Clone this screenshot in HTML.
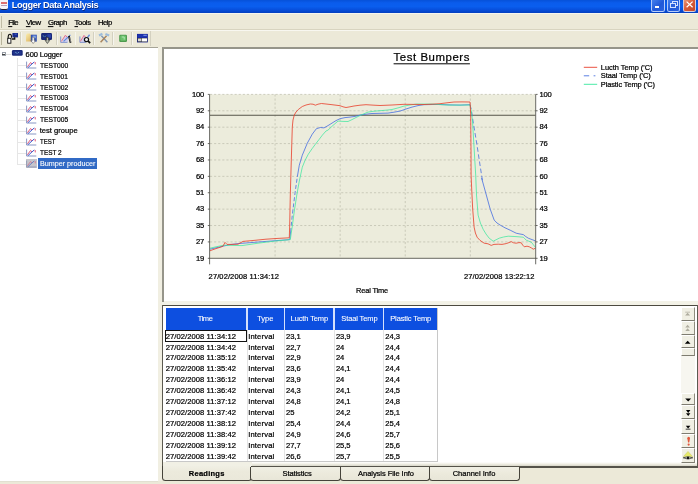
<!DOCTYPE html>
<html><head><meta charset="utf-8"><title>Logger Data Analysis</title>
<style>
html,body{margin:0;padding:0;}
body{width:698px;height:484px;overflow:hidden;background:#ECE9D8;position:relative;font-family:"Liberation Sans",sans-serif;font-size:7.5px;color:#000;}
.a{position:absolute;}
.t{position:absolute;white-space:nowrap;line-height:1;-webkit-text-stroke:0.22px currentColor;}
#w{position:absolute;left:0;top:0;width:698px;height:484px;will-change:transform;}
</style></head><body><div id="w">

<div class="a" style="left:0px;top:0px;width:698px;height:13px;background:linear-gradient(#0651D8 0%,#0A5CEC 22%,#0A5EEE 50%,#074FDC 75%,#0444C8 92%,#0540BE 100%);"></div>
<div class="a" style="left:0;top:0;width:8px;height:9px;background:#f4f4f8;border-radius:0 0 2px 2px;border-bottom:1px solid #223;"></div>
<div class="a" style="left:1px;top:2.2px;width:6px;height:1.4px;background:#dc7070;"></div>
<div class="a" style="left:1px;top:4.6px;width:6px;height:0.9px;background:#b8a0b8;"></div>
<div class="t" style="left:11.8px;top:5.8px;font-size:9.2px;letter-spacing:-0.36px;color:#fff;transform-origin:0 50%;transform:translate(0,-50%);font-weight:bold;-webkit-text-stroke:0;text-shadow:0.5px 0.5px 0 #0a2a80;">Logger Data Analysis</div>
<div class="a" style="left:651.2px;top:-3px;width:13.6px;height:14.6px;border-radius:2.2px;background:linear-gradient(135deg,#4a86f0,#2058d8 60%,#2a62e0);border:0.7px solid rgba(214,228,255,0.8);box-sizing:border-box;"></div>
<div class="a" style="left:666.8px;top:-3px;width:13.6px;height:14.6px;border-radius:2.2px;background:linear-gradient(135deg,#4a86f0,#2058d8 60%,#2a62e0);border:0.7px solid rgba(214,228,255,0.8);box-sizing:border-box;"></div>
<div class="a" style="left:682.8px;top:-3px;width:13.6px;height:14.6px;border-radius:2.2px;background:linear-gradient(135deg,#eca282,#d85c3a 50%,#c44828);border:0.7px solid rgba(214,228,255,0.8);box-sizing:border-box;"></div>
<div class="a" style="left:655px;top:5.8px;width:4.4px;height:2px;background:#fff;"></div>
<div class="a" style="left:672.4px;top:1px;width:3.4px;height:3px;border:0.7px solid #d4e0ff;box-sizing:content-box;border-top-width:1px"></div>
<div class="a" style="left:670.3px;top:3.2px;width:3.4px;height:3px;border:0.7px solid #d4e0ff;background:#2a60dc;border-top-width:1px"></div>
<svg class="a" style="left:685px;top:0.4px" width="10" height="10"><path d="M1.6 1.6 L7.6 7.2 M7.6 1.6 L1.6 7.2" stroke="#fff" stroke-width="1.25" fill="none"/></svg>
<div class="a" style="left:0px;top:13px;width:698px;height:17px;background:#ECE9D8;"></div>
<div class="a" style="left:0px;top:13px;width:698px;height:0.9px;background:#f6f5ee;"></div>
<div class="a" style="left:1.3px;top:15.5px;width:0.8px;height:12px;background:#c0bca6;"></div>
<div class="t" style="left:8.2px;top:22.5px;font-size:7.8px;letter-spacing:-0.695px;color:#000;transform-origin:0 50%;transform:translate(0,-50%);text-decoration-thickness:0.7px;text-underline-offset:0.8px;"><u>F</u>ile</div>
<div class="t" style="left:25.9px;top:22.5px;font-size:7.8px;letter-spacing:-0.466px;color:#000;transform-origin:0 50%;transform:translate(0,-50%);text-decoration-thickness:0.7px;text-underline-offset:0.8px;"><u>V</u>iew</div>
<div class="t" style="left:47.9px;top:22.5px;font-size:7.8px;letter-spacing:-0.534px;color:#000;transform-origin:0 50%;transform:translate(0,-50%);text-decoration-thickness:0.7px;text-underline-offset:0.8px;"><u>G</u>raph</div>
<div class="t" style="left:74.5px;top:22.5px;font-size:7.8px;letter-spacing:-0.401px;color:#000;transform-origin:0 50%;transform:translate(0,-50%);text-decoration-thickness:0.7px;text-underline-offset:0.8px;"><u>T</u>ools</div>
<div class="t" style="left:98.1px;top:22.5px;font-size:7.8px;letter-spacing:-0.637px;color:#000;transform-origin:0 50%;transform:translate(0,-50%);text-decoration-thickness:0.7px;text-underline-offset:0.8px;">Help</div>
<div class="a" style="left:0px;top:29.3px;width:698px;height:0.8px;background:#d8d4c0;"></div>
<div class="a" style="left:0px;top:30px;width:698px;height:0.6px;background:#f8f7f0;"></div>
<div class="a" style="left:1.2px;top:32px;width:0.8px;height:13px;background:#b8b49c;"></div>
<div class="a" style="left:20.200000000000003px;top:32px;width:0.8px;height:13px;background:#d4d1c0;"></div>
<div class="a" style="left:21.0px;top:32px;width:0.7px;height:13px;background:#f6f5ee;"></div>
<div class="a" style="left:55.800000000000004px;top:32px;width:0.8px;height:13px;background:#d4d1c0;"></div>
<div class="a" style="left:56.6px;top:32px;width:0.7px;height:13px;background:#f6f5ee;"></div>
<div class="a" style="left:74.6px;top:32px;width:0.8px;height:13px;background:#d4d1c0;"></div>
<div class="a" style="left:75.4px;top:32px;width:0.7px;height:13px;background:#f6f5ee;"></div>
<div class="a" style="left:93.39999999999999px;top:32px;width:0.8px;height:13px;background:#d4d1c0;"></div>
<div class="a" style="left:94.2px;top:32px;width:0.7px;height:13px;background:#f6f5ee;"></div>
<div class="a" style="left:112.3px;top:32px;width:0.8px;height:13px;background:#d4d1c0;"></div>
<div class="a" style="left:113.10000000000001px;top:32px;width:0.7px;height:13px;background:#f6f5ee;"></div>
<div class="a" style="left:131.4px;top:32px;width:0.8px;height:13px;background:#d4d1c0;"></div>
<div class="a" style="left:132.20000000000002px;top:32px;width:0.7px;height:13px;background:#f6f5ee;"></div>
<div class="a" style="left:150.3px;top:30.5px;width:0.8px;height:15.5px;background:#d4d1c0;"></div>
<svg class="a" style="left:0;top:30px" width="160" height="17" viewBox="0 30 160 17">
<defs><linearGradient id="fg" x1="0" y1="0" x2="1" y2="1"><stop offset="0" stop-color="#fbeeb0"/><stop offset="1" stop-color="#d6a850"/></linearGradient></defs>
<!-- 1 logger -->
<rect x="12.4" y="33" width="5.6" height="4.4" fill="#182a8a"/><rect x="14.6" y="33.6" width="2.2" height="1.2" fill="#3a58c4"/>
<path d="M14.6 37.2 V39 H11.8" stroke="#111" stroke-width="1.5" fill="none"/>
<rect x="7.7" y="38.3" width="3.2" height="4.9" fill="#fff" stroke="#111" stroke-width="0.9"/>
<path d="M8.2 38.2 C8 35.2 8.8 34.3 10 34.3 C11.3 34.3 11.6 35.4 11.6 37.8" fill="none" stroke="#111" stroke-width="1.1"/>
<!-- 2 folder -->
<path d="M26 41.6 V35 L27 33.6 H29.8 L30.6 34.8 H33.4 V41.6 Z" fill="url(#fg)"/>
<rect x="30.8" y="34.7" width="6" height="6.9" fill="#3454b4"/>
<rect x="32.6" y="35.6" width="3.2" height="2.6" fill="#86a8ea"/>
<path d="M32.2 37.2 h2 v3.4 h1.3 l-2.3 2.9 l-2.3 -2.9 h1.3 z" fill="#fff" stroke="#444" stroke-width="0.5"/>
<!-- 3 monitor -->
<rect x="41.1" y="33.1" width="10.9" height="6.9" rx="1.3" fill="#1a2878"/>
<rect x="47.4" y="34.2" width="3.6" height="3.6" fill="#2c44a8"/>
<path d="M42.8 35.6 l1.6 1 M45 36.8 l1 -1.2" stroke="#5a9ab8" stroke-width="0.9"/>
<path d="M46.4 37.4 h2 v3 h1.3 l-2.3 3.1 l-2.3 -3.1 h1.3 z" fill="#b8bcae" stroke="#222" stroke-width="0.6"/>
<!-- 4 chart pen -->
<path d="M61.6 42 L65.4 35.4 L68.2 38.6 V42 Z" fill="#d0d0ee"/>
<path d="M60.7 42.4 V36.4 M60.7 42.4 H67.5" stroke="#7a8ccc" stroke-width="0.9" fill="none"/>
<path d="M61.4 41.4 L65.4 35.2 L68.2 38.4" stroke="#e4708c" stroke-width="1" fill="none"/>
<path d="M63.6 41.4 L70.4 34.8" stroke="#5a86dc" stroke-width="1.1" fill="none"/>
<path d="M68.9 36 L70.6 42.8" stroke="#111" stroke-width="1.7" fill="none"/>
<path d="M69.6 37.4 L70.9 42.2" stroke="#e8e8e8" stroke-width="0.5" fill="none"/>
<!-- 5 chart zoom -->
<path d="M80.6 42 L84 35.6 L86.4 38 V42 Z" fill="#d0d0ee"/>
<path d="M79.9 42.4 V36.4 M79.9 42.4 H86" stroke="#7a8ccc" stroke-width="0.9" fill="none"/>
<path d="M80.4 41.4 L84 35.4 L86 37.6" stroke="#e4708c" stroke-width="1" fill="none"/>
<path d="M87.6 37.2 L89.6 34.8" stroke="#6a90e0" stroke-width="1.4" fill="none"/>
<circle cx="86.5" cy="39.6" r="2.1" fill="#ecf0f0" stroke="#111" stroke-width="1.2"/>
<path d="M88 41.2 L90.2 43" stroke="#111" stroke-width="1.7"/>
<!-- 6 tools -->
<path d="M101.4 35.8 L107.4 42.2" stroke="#7e96b4" stroke-width="1.4"/>
<path d="M106.6 35.8 L100.6 42.2" stroke="#a8845c" stroke-width="1.5"/>
<path d="M99 35.4 L102.4 33.8 M105.4 34 L109.2 35.6" stroke="#9cbcdc" stroke-width="2.2"/>
<!-- 7 green -->
<rect x="119.2" y="34.7" width="7.8" height="7.3" rx="1.2" fill="#4e9a4e"/>
<rect x="120.2" y="35.6" width="5.8" height="5.2" rx="1" fill="#6cc06c"/>
<path d="M121.8 37 h2.4 v2.6" stroke="#b8ecb8" stroke-width="0.9" fill="none"/>
<!-- 8 window -->
<rect x="137" y="33.9" width="10.8" height="8.5" fill="#14208c"/>
<rect x="137.4" y="34.2" width="10" height="3.4" fill="#1e34b0"/>
<rect x="143.4" y="34.8" width="3.4" height="0.9" fill="#90a8f0"/>
<rect x="137.6" y="38" width="9.6" height="3.8" fill="#4a4a4a"/>
<rect x="142" y="38.4" width="5" height="3" fill="#fff"/>
<rect x="138" y="38.6" width="3.4" height="2.6" fill="#d8d8d8"/>
</svg>
<div class="a" style="left:0px;top:46.5px;width:157.5px;height:1.5px;background:#a6a496;"></div>
<div class="a" style="left:0px;top:48px;width:157.5px;height:433.3px;background:#fff;"></div>
<div class="a" style="left:0px;top:481.3px;width:158px;height:0.7px;background:#e2e0d2;"></div>
<div class="a" style="left:157.5px;top:47px;width:0.6px;height:434.3px;background:#dcd9c8;"></div>
<div class="a" style="left:1.5px;top:52.1px;width:4.4px;height:4.3px;border:0.8px solid #9aa0a8;background:#fff;box-sizing:border-box"></div>
<div class="a" style="left:2.3px;top:53.9px;width:2.8px;height:0.8px;background:#444;"></div>
<div class="a" style="left:6px;top:54.1px;width:5px;height:0.6px;background:#dcdcdc;"></div>
<svg class="a" style="left:11px;top:49px" width="13" height="9"><rect x="0.9" y="1.1" width="10.8" height="5.7" rx="1.4" fill="#1a2a7a"/><rect x="2.2" y="2.2" width="8.2" height="3.4" rx="0.8" fill="#22368e"/><path d="M4.2 3.2 l1.6 1 M6.6 4.4 l1.4 -1.4" stroke="#6fa4c8" stroke-width="0.9"/></svg>
<div class="t" style="left:25.6px;top:54.9px;font-size:7.5px;letter-spacing:-0.135px;color:#000;transform-origin:0 50%;transform:translate(0,-50%);">600 Logger</div>
<div class="a" style="left:17.4px;top:57.8px;width:0.6px;height:106.6px;background:#e6e6e6;"></div>
<div class="a" style="left:17.4px;top:65.2px;width:8.4px;height:0.6px;background:#e6e6e6;"></div>
<svg class="a" style="left:26px;top:61.30px" width="11" height="8"><path d="M0.6 0.6 V7 H10.3" stroke="#6a7cb4" stroke-width="0.8" fill="none"/><path d="M1.4 5.8 L4.6 1.5 L5.9 3" stroke="#e04868" stroke-width="0.9" fill="none"/><path d="M1.9 6.7 L5 3.8 L8.3 0.9" stroke="#3c5ad0" stroke-width="1" fill="none"/><path d="M9.1 1 L9.3 3.4" stroke="#e04868" stroke-width="0.9"/></svg>
<div class="t" style="left:39.7px;top:65.7px;font-size:7.6px;letter-spacing:0px;color:#000;transform-origin:0 50%;transform:translate(0,-50%) scaleX(0.8822);">TEST000</div>
<div class="a" style="left:17.4px;top:76.13px;width:8.4px;height:0.6px;background:#e6e6e6;"></div>
<svg class="a" style="left:26px;top:72.23px" width="11" height="8"><path d="M0.6 0.6 V7 H10.3" stroke="#6a7cb4" stroke-width="0.8" fill="none"/><path d="M1.4 5.8 L4.6 1.5 L5.9 3" stroke="#e04868" stroke-width="0.9" fill="none"/><path d="M1.9 6.7 L5 3.8 L8.3 0.9" stroke="#3c5ad0" stroke-width="1" fill="none"/><path d="M9.1 1 L9.3 3.4" stroke="#e04868" stroke-width="0.9"/></svg>
<div class="t" style="left:39.7px;top:76.63px;font-size:7.6px;letter-spacing:0px;color:#000;transform-origin:0 50%;transform:translate(0,-50%) scaleX(0.8666);">TEST001</div>
<div class="a" style="left:17.4px;top:87.06px;width:8.4px;height:0.6px;background:#e6e6e6;"></div>
<svg class="a" style="left:26px;top:83.16px" width="11" height="8"><path d="M0.6 0.6 V7 H10.3" stroke="#6a7cb4" stroke-width="0.8" fill="none"/><path d="M1.4 5.8 L4.6 1.5 L5.9 3" stroke="#e04868" stroke-width="0.9" fill="none"/><path d="M1.9 6.7 L5 3.8 L8.3 0.9" stroke="#3c5ad0" stroke-width="1" fill="none"/><path d="M9.1 1 L9.3 3.4" stroke="#e04868" stroke-width="0.9"/></svg>
<div class="t" style="left:39.7px;top:87.56px;font-size:7.6px;letter-spacing:0px;color:#000;transform-origin:0 50%;transform:translate(0,-50%) scaleX(0.8822);">TEST002</div>
<div class="a" style="left:17.4px;top:97.99000000000001px;width:8.4px;height:0.6px;background:#e6e6e6;"></div>
<svg class="a" style="left:26px;top:94.09px" width="11" height="8"><path d="M0.6 0.6 V7 H10.3" stroke="#6a7cb4" stroke-width="0.8" fill="none"/><path d="M1.4 5.8 L4.6 1.5 L5.9 3" stroke="#e04868" stroke-width="0.9" fill="none"/><path d="M1.9 6.7 L5 3.8 L8.3 0.9" stroke="#3c5ad0" stroke-width="1" fill="none"/><path d="M9.1 1 L9.3 3.4" stroke="#e04868" stroke-width="0.9"/></svg>
<div class="t" style="left:39.7px;top:98.49000000000001px;font-size:7.6px;letter-spacing:0px;color:#000;transform-origin:0 50%;transform:translate(0,-50%) scaleX(0.8822);">TEST003</div>
<div class="a" style="left:17.4px;top:108.92px;width:8.4px;height:0.6px;background:#e6e6e6;"></div>
<svg class="a" style="left:26px;top:105.02px" width="11" height="8"><path d="M0.6 0.6 V7 H10.3" stroke="#6a7cb4" stroke-width="0.8" fill="none"/><path d="M1.4 5.8 L4.6 1.5 L5.9 3" stroke="#e04868" stroke-width="0.9" fill="none"/><path d="M1.9 6.7 L5 3.8 L8.3 0.9" stroke="#3c5ad0" stroke-width="1" fill="none"/><path d="M9.1 1 L9.3 3.4" stroke="#e04868" stroke-width="0.9"/></svg>
<div class="t" style="left:39.7px;top:109.42px;font-size:7.6px;letter-spacing:0px;color:#000;transform-origin:0 50%;transform:translate(0,-50%) scaleX(0.8822);">TEST004</div>
<div class="a" style="left:17.4px;top:119.85px;width:8.4px;height:0.6px;background:#e6e6e6;"></div>
<svg class="a" style="left:26px;top:115.95px" width="11" height="8"><path d="M0.6 0.6 V7 H10.3" stroke="#6a7cb4" stroke-width="0.8" fill="none"/><path d="M1.4 5.8 L4.6 1.5 L5.9 3" stroke="#e04868" stroke-width="0.9" fill="none"/><path d="M1.9 6.7 L5 3.8 L8.3 0.9" stroke="#3c5ad0" stroke-width="1" fill="none"/><path d="M9.1 1 L9.3 3.4" stroke="#e04868" stroke-width="0.9"/></svg>
<div class="t" style="left:39.7px;top:120.35px;font-size:7.6px;letter-spacing:0px;color:#000;transform-origin:0 50%;transform:translate(0,-50%) scaleX(0.8822);">TEST005</div>
<div class="a" style="left:17.4px;top:130.78px;width:8.4px;height:0.6px;background:#e6e6e6;"></div>
<svg class="a" style="left:26px;top:126.88px" width="11" height="8"><path d="M0.6 0.6 V7 H10.3" stroke="#6a7cb4" stroke-width="0.8" fill="none"/><path d="M1.4 5.8 L4.6 1.5 L5.9 3" stroke="#e04868" stroke-width="0.9" fill="none"/><path d="M1.9 6.7 L5 3.8 L8.3 0.9" stroke="#3c5ad0" stroke-width="1" fill="none"/><path d="M9.1 1 L9.3 3.4" stroke="#e04868" stroke-width="0.9"/></svg>
<div class="t" style="left:39.7px;top:131.28px;font-size:7.6px;letter-spacing:0.0px;color:#000;transform-origin:0 50%;transform:translate(0,-50%);">test groupe</div>
<div class="a" style="left:17.4px;top:141.70999999999998px;width:8.4px;height:0.6px;background:#e6e6e6;"></div>
<svg class="a" style="left:26px;top:137.81px" width="11" height="8"><path d="M0.6 0.6 V7 H10.3" stroke="#6a7cb4" stroke-width="0.8" fill="none"/><path d="M1.4 5.8 L4.6 1.5 L5.9 3" stroke="#e04868" stroke-width="0.9" fill="none"/><path d="M1.9 6.7 L5 3.8 L8.3 0.9" stroke="#3c5ad0" stroke-width="1" fill="none"/><path d="M9.1 1 L9.3 3.4" stroke="#e04868" stroke-width="0.9"/></svg>
<div class="t" style="left:39.7px;top:142.20999999999998px;font-size:7.6px;letter-spacing:0px;color:#000;transform-origin:0 50%;transform:translate(0,-50%) scaleX(0.7929);">TEST</div>
<div class="a" style="left:17.4px;top:152.64px;width:8.4px;height:0.6px;background:#e6e6e6;"></div>
<svg class="a" style="left:26px;top:148.74px" width="11" height="8"><path d="M0.6 0.6 V7 H10.3" stroke="#6a7cb4" stroke-width="0.8" fill="none"/><path d="M1.4 5.8 L4.6 1.5 L5.9 3" stroke="#e04868" stroke-width="0.9" fill="none"/><path d="M1.9 6.7 L5 3.8 L8.3 0.9" stroke="#3c5ad0" stroke-width="1" fill="none"/><path d="M9.1 1 L9.3 3.4" stroke="#e04868" stroke-width="0.9"/></svg>
<div class="t" style="left:39.7px;top:153.14px;font-size:7.6px;letter-spacing:0px;color:#000;transform-origin:0 50%;transform:translate(0,-50%) scaleX(0.8473);">TEST 2</div>
<div class="a" style="left:17.4px;top:163.57px;width:8.4px;height:0.6px;background:#e6e6e6;"></div>
<div class="a" style="left:25.8px;top:158.87px;width:10.8px;height:9.2px;background:#c6c6cc;"></div>
<svg class="a" style="left:26px;top:159.67px" width="11" height="8"><path d="M0.6 0.6 V7 H10.3" stroke="#8890b0" stroke-width="0.8" fill="none"/><path d="M1.4 5.8 L4.6 1.5 L5.9 3" stroke="#d27890" stroke-width="0.9" fill="none"/><path d="M1.9 6.7 L5 3.8 L8.3 0.9" stroke="#6880c4" stroke-width="1" fill="none"/><path d="M9.1 1 L9.3 3.4" stroke="#d27890" stroke-width="0.9"/></svg>
<div class="a" style="left:38px;top:158.07px;width:59px;height:10.7px;background:#316AC5;"></div>
<div class="t" style="left:39.5px;top:164.07px;font-size:7.6px;letter-spacing:0px;color:#fff;transform-origin:0 50%;transform:translate(0,-50%) scaleX(0.9442);-webkit-text-stroke:0.1px #fff;">Bumper producer</div>
<div class="a" style="left:158.1px;top:47px;width:4.2px;height:434.3px;background:#f1efe2;"></div>
<div class="a" style="left:162px;top:301.4px;width:536px;height:3.6px;background:#f3f2e7;"></div>
<div class="a" style="left:162.3px;top:47px;width:535.7px;height:1.6px;background:#96958a;"></div>
<div class="a" style="left:162.0px;top:47px;width:1.7px;height:254.6px;background:#96958a;"></div>
<div class="a" style="left:163.9px;top:48.6px;width:534.1px;height:252.8px;background:#fff;"></div>
<svg class="a" style="left:0;top:0" width="698" height="484" viewBox="0 0 698 484">
<rect x="210" y="94.4" width="325.4" height="163.9" fill="#ECECDC"/>
<path d="M210 94.40 H535.4" stroke="#bcbbab" stroke-width="0.7" stroke-dasharray="2.1 2" fill="none"/>
<path d="M210 110.79 H535.4" stroke="#bcbbab" stroke-width="0.7" stroke-dasharray="2.1 2" fill="none"/>
<path d="M210 127.18 H535.4" stroke="#bcbbab" stroke-width="0.7" stroke-dasharray="2.1 2" fill="none"/>
<path d="M210 143.57 H535.4" stroke="#bcbbab" stroke-width="0.7" stroke-dasharray="2.1 2" fill="none"/>
<path d="M210 159.96 H535.4" stroke="#bcbbab" stroke-width="0.7" stroke-dasharray="2.1 2" fill="none"/>
<path d="M210 176.35 H535.4" stroke="#bcbbab" stroke-width="0.7" stroke-dasharray="2.1 2" fill="none"/>
<path d="M210 192.74 H535.4" stroke="#bcbbab" stroke-width="0.7" stroke-dasharray="2.1 2" fill="none"/>
<path d="M210 209.13 H535.4" stroke="#bcbbab" stroke-width="0.7" stroke-dasharray="2.1 2" fill="none"/>
<path d="M210 225.52 H535.4" stroke="#bcbbab" stroke-width="0.7" stroke-dasharray="2.1 2" fill="none"/>
<path d="M210 241.91 H535.4" stroke="#bcbbab" stroke-width="0.7" stroke-dasharray="2.1 2" fill="none"/>
<path d="M275.08 94.4 V258.3" stroke="#bcbbab" stroke-width="0.7" stroke-dasharray="2.1 2" fill="none"/>
<path d="M340.16 94.4 V258.3" stroke="#bcbbab" stroke-width="0.7" stroke-dasharray="2.1 2" fill="none"/>
<path d="M405.24 94.4 V258.3" stroke="#bcbbab" stroke-width="0.7" stroke-dasharray="2.1 2" fill="none"/>
<path d="M470.32 94.4 V258.3" stroke="#bcbbab" stroke-width="0.7" stroke-dasharray="2.1 2" fill="none"/>
<path d="M210 115.2 H535.4" stroke="#56544a" stroke-width="1.15"/>
<path d="M210.0 249.2 L216.0 247.8 L223.0 246.2 L230.0 244.6 L238.0 243.6 L256.0 242.2 L274.0 240.8 L289.7 239.6 L290.6 232.0" stroke="#4870e0" stroke-width="0.82" fill="none" stroke-linejoin="round"/>
<path d="M290.6 232.0 L292.3 215.0 L295.3 191.0 L297.3 176.9" stroke="#4870e0" stroke-width="0.82" fill="none" stroke-linejoin="round" stroke-dasharray="4 2.2"/>
<path d="M297.3 176.9 L299.3 165.2 L302.3 155.2 L307.3 143.2 L312.3 134.1 L316.4 128.7 L320.4 127.5 L324.0 127.9 L328.0 125.6 L332.0 123.1 L336.0 120.6 L340.0 118.7 L345.0 117.6 L350.0 117.1 L355.0 116.4 L360.0 115.1 L366.0 114.2 L372.0 113.5 L380.0 113.3 L388.0 113.1 L394.0 112.2 L400.0 111.1 L406.0 109.0 L412.0 107.1 L418.0 105.6 L424.0 104.7 L432.0 104.5 L440.0 104.5 L450.0 104.9 L460.0 105.1 L470.0 104.7" stroke="#4870e0" stroke-width="0.82" fill="none" stroke-linejoin="round"/>
<path d="M470.0 104.7 L471.4 110.0 L473.0 121.0 L477.0 145.0 L480.0 165.0 L482.5 181.0" stroke="#4870e0" stroke-width="0.82" fill="none" stroke-linejoin="round" stroke-dasharray="4.6 2.6"/>
<path d="M481.6 178.0 L485.2 191.0 L490.2 209.1 L494.2 220.1 L497.0 223.0 L500.2 225.1 L505.0 227.8 L510.2 230.2 L516.2 233.2 L520.0 234.0 L523.3 234.6 L525.8 236.6 L528.3 238.2 L532.0 239.6 L535.3 240.8" stroke="#4870e0" stroke-width="0.82" fill="none" stroke-linejoin="round"/>
<path d="M210.0 248.2 L216.0 246.8 L224.0 245.2 L232.0 245.4 L242.0 245.6 L258.0 243.2 L274.0 241.2 L290.3 239.6 L292.3 226.0 L294.3 211.0 L296.8 195.0 L299.3 181.0 L302.3 167.2 L305.0 160.5 L308.3 154.2 L312.0 148.8 L315.4 144.2 L319.0 139.6 L322.4 135.1 L326.0 131.0 L328.0 130.1 L333.0 125.4 L338.0 121.1 L343.0 121.4 L348.0 121.5 L352.0 119.6 L356.0 117.5 L362.0 114.6 L368.0 112.1 L374.0 111.2 L380.0 110.7 L386.0 110.2 L392.0 109.5 L398.0 107.9 L404.0 106.1 L410.0 105.0 L416.0 104.1 L424.0 104.1 L432.0 104.1 L440.0 104.6 L448.0 105.1 L460.0 105.1 L470.0 105.0 L471.4 112.0 L472.5 121.0 L473.5 138.0 L474.5 155.0 L475.7 175.0 L476.5 195.0 L478.1 215.1 L480.4 223.0 L483.1 229.2 L486.0 234.0 L489.2 238.2 L493.2 241.2 L496.0 239.8 L499.2 238.2 L503.5 237.0 L508.2 236.2 L516.0 236.6 L523.3 237.2 L524.8 238.8 L526.3 240.2 L528.8 241.2 L531.3 242.2 L533.4 244.8 L535.3 247.2" stroke="#36e89c" stroke-width="0.85" fill="none" stroke-linejoin="round" stroke-opacity="0.85"/>
<path d="M210.0 250.8 L212.0 250.0 L216.0 248.6 L221.0 247.0 L223.0 246.2 L225.0 242.4 L227.0 244.4 L232.0 244.4 L238.0 244.2 L243.0 241.4 L252.0 240.6 L266.0 239.2 L278.0 238.4 L289.3 237.8 L289.7 225.0 L290.3 195.0 L291.3 160.0 L292.3 127.0 L293.0 120.0 L294.3 115.0 L296.0 112.0 L298.3 109.5 L302.3 106.5 L306.0 105.0 L310.3 104.0 L313.0 104.2 L315.4 105.2 L318.0 104.2 L321.4 103.5 L326.0 104.0 L332.0 104.7 L340.0 105.7 L343.0 106.8 L346.0 107.5 L350.0 106.8 L354.0 106.0 L360.0 105.2 L366.0 104.7 L374.0 105.2 L380.0 105.5 L392.0 105.0 L404.0 104.3 L414.0 104.4 L424.0 104.5 L432.0 104.2 L440.0 103.7 L447.0 102.8 L454.0 102.0 L462.0 101.9 L470.0 102.0 L470.4 108.0 L470.7 115.0 L471.0 150.0 L471.1 175.0 L471.7 189.0 L472.7 209.0 L474.1 227.1 L475.4 233.0 L477.1 237.2 L480.0 240.4 L484.2 243.2 L488.0 243.8 L491.2 245.4 L494.0 244.4 L498.2 244.2 L502.0 244.4 L506.2 243.6 L509.0 242.6 L511.2 241.6 L513.5 242.8 L516.2 243.2 L519.0 242.6 L521.3 242.8 L522.6 245.0 L524.3 246.8 L527.0 246.2 L529.3 246.8 L531.5 248.0 L533.3 249.2 L535.3 248.2" stroke="#e8402c" stroke-width="0.82" fill="none" stroke-linejoin="round"/>
<path d="M209.6 94.4 V264.3 M535.6999999999999 94.4 V264.3 M209.6 258.3 H535.6999999999999" stroke="#44443c" stroke-width="0.8" fill="none"/>
<path d="M207.8 94.40 H209.6 M535.6999999999999 94.40 H537.6" stroke="#44443c" stroke-width="0.8"/>
<path d="M207.8 110.79 H209.6 M535.6999999999999 110.79 H537.6" stroke="#44443c" stroke-width="0.8"/>
<path d="M207.8 127.18 H209.6 M535.6999999999999 127.18 H537.6" stroke="#44443c" stroke-width="0.8"/>
<path d="M207.8 143.57 H209.6 M535.6999999999999 143.57 H537.6" stroke="#44443c" stroke-width="0.8"/>
<path d="M207.8 159.96 H209.6 M535.6999999999999 159.96 H537.6" stroke="#44443c" stroke-width="0.8"/>
<path d="M207.8 176.35 H209.6 M535.6999999999999 176.35 H537.6" stroke="#44443c" stroke-width="0.8"/>
<path d="M207.8 192.74 H209.6 M535.6999999999999 192.74 H537.6" stroke="#44443c" stroke-width="0.8"/>
<path d="M207.8 209.13 H209.6 M535.6999999999999 209.13 H537.6" stroke="#44443c" stroke-width="0.8"/>
<path d="M207.8 225.52 H209.6 M535.6999999999999 225.52 H537.6" stroke="#44443c" stroke-width="0.8"/>
<path d="M207.8 241.91 H209.6 M535.6999999999999 241.91 H537.6" stroke="#44443c" stroke-width="0.8"/>
<path d="M207.8 258.30 H209.6 M535.6999999999999 258.30 H537.6" stroke="#44443c" stroke-width="0.8"/>
<path d="M583.8 67.3 H597.2" stroke="#e8402c" stroke-width="0.9"/>
<path d="M583.8 75.8 H597.2" stroke="#4870e0" stroke-width="0.9" stroke-dasharray="5.4 4.4 1.8 9"/>
<path d="M583.8 84.3 H597.2" stroke="#36e89c" stroke-width="0.9"/>
</svg>
<div class="t" style="left:203.9px;top:94.60000000000001px;font-size:7.6px;letter-spacing:-0.3px;color:#000;transform:translate(-100%,-50%);">100</div>
<div class="t" style="left:539.6px;top:94.60000000000001px;font-size:7.6px;letter-spacing:-0.3px;color:#000;transform-origin:0 50%;transform:translate(0,-50%);">100</div>
<div class="t" style="left:203.9px;top:110.99000000000001px;font-size:7.6px;letter-spacing:-0.3px;color:#000;transform:translate(-100%,-50%);">92</div>
<div class="t" style="left:539.6px;top:110.99000000000001px;font-size:7.6px;letter-spacing:-0.3px;color:#000;transform-origin:0 50%;transform:translate(0,-50%);">92</div>
<div class="t" style="left:203.9px;top:127.38000000000001px;font-size:7.6px;letter-spacing:-0.3px;color:#000;transform:translate(-100%,-50%);">84</div>
<div class="t" style="left:539.6px;top:127.38000000000001px;font-size:7.6px;letter-spacing:-0.3px;color:#000;transform-origin:0 50%;transform:translate(0,-50%);">84</div>
<div class="t" style="left:203.9px;top:143.76999999999998px;font-size:7.6px;letter-spacing:-0.3px;color:#000;transform:translate(-100%,-50%);">76</div>
<div class="t" style="left:539.6px;top:143.76999999999998px;font-size:7.6px;letter-spacing:-0.3px;color:#000;transform-origin:0 50%;transform:translate(0,-50%);">76</div>
<div class="t" style="left:203.9px;top:160.16px;font-size:7.6px;letter-spacing:-0.3px;color:#000;transform:translate(-100%,-50%);">68</div>
<div class="t" style="left:539.6px;top:160.16px;font-size:7.6px;letter-spacing:-0.3px;color:#000;transform-origin:0 50%;transform:translate(0,-50%);">68</div>
<div class="t" style="left:203.9px;top:176.55px;font-size:7.6px;letter-spacing:-0.3px;color:#000;transform:translate(-100%,-50%);">60</div>
<div class="t" style="left:539.6px;top:176.55px;font-size:7.6px;letter-spacing:-0.3px;color:#000;transform-origin:0 50%;transform:translate(0,-50%);">60</div>
<div class="t" style="left:203.9px;top:192.94px;font-size:7.6px;letter-spacing:-0.3px;color:#000;transform:translate(-100%,-50%);">51</div>
<div class="t" style="left:539.6px;top:192.94px;font-size:7.6px;letter-spacing:-0.3px;color:#000;transform-origin:0 50%;transform:translate(0,-50%);">51</div>
<div class="t" style="left:203.9px;top:209.32999999999998px;font-size:7.6px;letter-spacing:-0.3px;color:#000;transform:translate(-100%,-50%);">43</div>
<div class="t" style="left:539.6px;top:209.32999999999998px;font-size:7.6px;letter-spacing:-0.3px;color:#000;transform-origin:0 50%;transform:translate(0,-50%);">43</div>
<div class="t" style="left:203.9px;top:225.72px;font-size:7.6px;letter-spacing:-0.3px;color:#000;transform:translate(-100%,-50%);">35</div>
<div class="t" style="left:539.6px;top:225.72px;font-size:7.6px;letter-spacing:-0.3px;color:#000;transform-origin:0 50%;transform:translate(0,-50%);">35</div>
<div class="t" style="left:203.9px;top:242.11px;font-size:7.6px;letter-spacing:-0.3px;color:#000;transform:translate(-100%,-50%);">27</div>
<div class="t" style="left:539.6px;top:242.11px;font-size:7.6px;letter-spacing:-0.3px;color:#000;transform-origin:0 50%;transform:translate(0,-50%);">27</div>
<div class="t" style="left:203.9px;top:258.5px;font-size:7.6px;letter-spacing:-0.3px;color:#000;transform:translate(-100%,-50%);">19</div>
<div class="t" style="left:539.6px;top:258.5px;font-size:7.6px;letter-spacing:-0.3px;color:#000;transform-origin:0 50%;transform:translate(0,-50%);">19</div>
<div class="t" style="left:393.6px;top:58.4px;font-size:11.4px;letter-spacing:0.555px;color:#000;transform-origin:0 50%;transform:translate(0,-50%);text-decoration:underline;text-decoration-thickness:1px;text-underline-offset:1.7px;">Test Bumpers</div>
<div class="t" style="left:600.8px;top:67.5px;font-size:7.4px;letter-spacing:-0.006px;color:#000;transform-origin:0 50%;transform:translate(0,-50%);">Lucth Temp ('C)</div>
<div class="t" style="left:600.8px;top:76.4px;font-size:7.4px;letter-spacing:-0.044px;color:#000;transform-origin:0 50%;transform:translate(0,-50%);">Staal Temp ('C)</div>
<div class="t" style="left:600.8px;top:84.5px;font-size:7.4px;letter-spacing:-0.081px;color:#000;transform-origin:0 50%;transform:translate(0,-50%);">Plastic Temp ('C)</div>
<div class="t" style="left:208.6px;top:277.3px;font-size:7.5px;letter-spacing:0.112px;color:#000;transform-origin:0 50%;transform:translate(0,-50%);">27/02/2008 11:34:12</div>
<div class="t" style="left:464.1px;top:277.3px;font-size:7.5px;letter-spacing:0.083px;color:#000;transform-origin:0 50%;transform:translate(0,-50%);">27/02/2008 13:22:12</div>
<div class="t" style="left:372px;top:291px;font-size:7.4px;letter-spacing:-0.165px;color:#000;transform:translate(-50%,-50%);">Real Time</div>
<div class="a" style="left:162px;top:305px;width:536px;height:1.3px;background:#4c4a40;"></div>
<div class="a" style="left:162px;top:305px;width:1.4px;height:160px;background:#5c5a50;"></div>
<div class="a" style="left:163.4px;top:306.3px;width:533.2px;height:158.4px;background:#fff;"></div>
<div class="a" style="left:696.5px;top:305px;width:1.5px;height:162px;background:#5c5a50;"></div>
<div class="a" style="left:251.6px;top:462.4px;width:445px;height:3.4px;background:linear-gradient(#fff,#f4f3ea 40%,#d8d6c8);"></div>
<div class="a" style="left:251px;top:466.1px;width:447px;height:1.8px;background:#55534a;"></div>
<div class="a" style="left:165.6px;top:308.2px;width:271.4px;height:21.9px;background:#0D4FE0;"></div>
<div class="t" style="left:205.1px;top:319.4px;font-size:7.5px;letter-spacing:-0.448px;color:#fff;transform:translate(-50%,-50%);-webkit-text-stroke:0.08px #fff;">Time</div>
<div class="a" style="left:246.4px;top:308.2px;width:1.35px;height:21.9px;background:#d4e0fc;"></div>
<div class="t" style="left:265.3px;top:319.4px;font-size:7.5px;letter-spacing:0.009px;color:#fff;transform:translate(-50%,-50%);-webkit-text-stroke:0.08px #fff;">Type</div>
<div class="a" style="left:284.0px;top:308.2px;width:1.35px;height:21.9px;background:#d4e0fc;"></div>
<div class="t" style="left:309.3px;top:319.4px;font-size:7.5px;letter-spacing:-0.124px;color:#fff;transform:translate(-50%,-50%);-webkit-text-stroke:0.08px #fff;">Lucth Temp</div>
<div class="a" style="left:333.29999999999995px;top:308.2px;width:1.35px;height:21.9px;background:#d4e0fc;"></div>
<div class="t" style="left:359.4px;top:319.4px;font-size:7.5px;letter-spacing:-0.129px;color:#fff;transform:translate(-50%,-50%);-webkit-text-stroke:0.08px #fff;">Staal Temp</div>
<div class="a" style="left:382.59999999999997px;top:308.2px;width:1.35px;height:21.9px;background:#d4e0fc;"></div>
<div class="t" style="left:410.7px;top:319.4px;font-size:7.5px;letter-spacing:-0.124px;color:#fff;transform:translate(-50%,-50%);-webkit-text-stroke:0.08px #fff;">Plastic Temp</div>
<div class="a" style="left:437.2px;top:308.3px;width:0.7px;height:153.4px;background:#c8c8c8;"></div>
<div class="a" style="left:165.6px;top:461.2px;width:272px;height:0.7px;background:#c8c8c8;"></div>
<div class="a" style="left:246.8px;top:330.2px;width:0.7px;height:131px;background:#e4e4e4;"></div>
<div class="a" style="left:284.40000000000003px;top:330.2px;width:0.7px;height:131px;background:#e4e4e4;"></div>
<div class="a" style="left:333.7px;top:330.2px;width:0.7px;height:131px;background:#e4e4e4;"></div>
<div class="a" style="left:383.0px;top:330.2px;width:0.7px;height:131px;background:#e4e4e4;"></div>
<div class="t" style="left:165.8px;top:336.6px;font-size:7.6px;letter-spacing:0.057px;color:#000;transform-origin:0 50%;transform:translate(0,-50%);">27/02/2008 11:34:12</div>
<div class="t" style="left:248.2px;top:336.6px;font-size:7.6px;letter-spacing:0.162px;color:#000;transform-origin:0 50%;transform:translate(0,-50%);">Interval</div>
<div class="t" style="left:286.0px;top:336.6px;font-size:7.6px;letter-spacing:-0.05px;color:#000;transform-origin:0 50%;transform:translate(0,-50%);">23,1</div>
<div class="t" style="left:335.9px;top:336.6px;font-size:7.6px;letter-spacing:-0.05px;color:#000;transform-origin:0 50%;transform:translate(0,-50%);">23,9</div>
<div class="t" style="left:385.3px;top:336.6px;font-size:7.6px;letter-spacing:-0.05px;color:#000;transform-origin:0 50%;transform:translate(0,-50%);">24,3</div>
<div class="t" style="left:165.8px;top:347.53000000000003px;font-size:7.6px;letter-spacing:0.057px;color:#000;transform-origin:0 50%;transform:translate(0,-50%);">27/02/2008 11:34:42</div>
<div class="t" style="left:248.2px;top:347.53000000000003px;font-size:7.6px;letter-spacing:0.162px;color:#000;transform-origin:0 50%;transform:translate(0,-50%);">Interval</div>
<div class="t" style="left:286.0px;top:347.53000000000003px;font-size:7.6px;letter-spacing:-0.05px;color:#000;transform-origin:0 50%;transform:translate(0,-50%);">22,7</div>
<div class="t" style="left:335.9px;top:347.53000000000003px;font-size:7.6px;letter-spacing:-0.05px;color:#000;transform-origin:0 50%;transform:translate(0,-50%);">24</div>
<div class="t" style="left:385.3px;top:347.53000000000003px;font-size:7.6px;letter-spacing:-0.05px;color:#000;transform-origin:0 50%;transform:translate(0,-50%);">24,4</div>
<div class="t" style="left:165.8px;top:358.46000000000004px;font-size:7.6px;letter-spacing:0.057px;color:#000;transform-origin:0 50%;transform:translate(0,-50%);">27/02/2008 11:35:12</div>
<div class="t" style="left:248.2px;top:358.46000000000004px;font-size:7.6px;letter-spacing:0.162px;color:#000;transform-origin:0 50%;transform:translate(0,-50%);">Interval</div>
<div class="t" style="left:286.0px;top:358.46000000000004px;font-size:7.6px;letter-spacing:-0.05px;color:#000;transform-origin:0 50%;transform:translate(0,-50%);">22,9</div>
<div class="t" style="left:335.9px;top:358.46000000000004px;font-size:7.6px;letter-spacing:-0.05px;color:#000;transform-origin:0 50%;transform:translate(0,-50%);">24</div>
<div class="t" style="left:385.3px;top:358.46000000000004px;font-size:7.6px;letter-spacing:-0.05px;color:#000;transform-origin:0 50%;transform:translate(0,-50%);">24,4</div>
<div class="t" style="left:165.8px;top:369.39000000000004px;font-size:7.6px;letter-spacing:0.057px;color:#000;transform-origin:0 50%;transform:translate(0,-50%);">27/02/2008 11:35:42</div>
<div class="t" style="left:248.2px;top:369.39000000000004px;font-size:7.6px;letter-spacing:0.162px;color:#000;transform-origin:0 50%;transform:translate(0,-50%);">Interval</div>
<div class="t" style="left:286.0px;top:369.39000000000004px;font-size:7.6px;letter-spacing:-0.05px;color:#000;transform-origin:0 50%;transform:translate(0,-50%);">23,6</div>
<div class="t" style="left:335.9px;top:369.39000000000004px;font-size:7.6px;letter-spacing:-0.05px;color:#000;transform-origin:0 50%;transform:translate(0,-50%);">24,1</div>
<div class="t" style="left:385.3px;top:369.39000000000004px;font-size:7.6px;letter-spacing:-0.05px;color:#000;transform-origin:0 50%;transform:translate(0,-50%);">24,4</div>
<div class="t" style="left:165.8px;top:380.32000000000005px;font-size:7.6px;letter-spacing:0.057px;color:#000;transform-origin:0 50%;transform:translate(0,-50%);">27/02/2008 11:36:12</div>
<div class="t" style="left:248.2px;top:380.32000000000005px;font-size:7.6px;letter-spacing:0.162px;color:#000;transform-origin:0 50%;transform:translate(0,-50%);">Interval</div>
<div class="t" style="left:286.0px;top:380.32000000000005px;font-size:7.6px;letter-spacing:-0.05px;color:#000;transform-origin:0 50%;transform:translate(0,-50%);">23,9</div>
<div class="t" style="left:335.9px;top:380.32000000000005px;font-size:7.6px;letter-spacing:-0.05px;color:#000;transform-origin:0 50%;transform:translate(0,-50%);">24</div>
<div class="t" style="left:385.3px;top:380.32000000000005px;font-size:7.6px;letter-spacing:-0.05px;color:#000;transform-origin:0 50%;transform:translate(0,-50%);">24,4</div>
<div class="t" style="left:165.8px;top:391.25px;font-size:7.6px;letter-spacing:0.057px;color:#000;transform-origin:0 50%;transform:translate(0,-50%);">27/02/2008 11:36:42</div>
<div class="t" style="left:248.2px;top:391.25px;font-size:7.6px;letter-spacing:0.162px;color:#000;transform-origin:0 50%;transform:translate(0,-50%);">Interval</div>
<div class="t" style="left:286.0px;top:391.25px;font-size:7.6px;letter-spacing:-0.05px;color:#000;transform-origin:0 50%;transform:translate(0,-50%);">24,3</div>
<div class="t" style="left:335.9px;top:391.25px;font-size:7.6px;letter-spacing:-0.05px;color:#000;transform-origin:0 50%;transform:translate(0,-50%);">24,1</div>
<div class="t" style="left:385.3px;top:391.25px;font-size:7.6px;letter-spacing:-0.05px;color:#000;transform-origin:0 50%;transform:translate(0,-50%);">24,5</div>
<div class="t" style="left:165.8px;top:402.18px;font-size:7.6px;letter-spacing:0.057px;color:#000;transform-origin:0 50%;transform:translate(0,-50%);">27/02/2008 11:37:12</div>
<div class="t" style="left:248.2px;top:402.18px;font-size:7.6px;letter-spacing:0.162px;color:#000;transform-origin:0 50%;transform:translate(0,-50%);">Interval</div>
<div class="t" style="left:286.0px;top:402.18px;font-size:7.6px;letter-spacing:-0.05px;color:#000;transform-origin:0 50%;transform:translate(0,-50%);">24,8</div>
<div class="t" style="left:335.9px;top:402.18px;font-size:7.6px;letter-spacing:-0.05px;color:#000;transform-origin:0 50%;transform:translate(0,-50%);">24,1</div>
<div class="t" style="left:385.3px;top:402.18px;font-size:7.6px;letter-spacing:-0.05px;color:#000;transform-origin:0 50%;transform:translate(0,-50%);">24,8</div>
<div class="t" style="left:165.8px;top:413.11px;font-size:7.6px;letter-spacing:0.057px;color:#000;transform-origin:0 50%;transform:translate(0,-50%);">27/02/2008 11:37:42</div>
<div class="t" style="left:248.2px;top:413.11px;font-size:7.6px;letter-spacing:0.162px;color:#000;transform-origin:0 50%;transform:translate(0,-50%);">Interval</div>
<div class="t" style="left:286.0px;top:413.11px;font-size:7.6px;letter-spacing:-0.05px;color:#000;transform-origin:0 50%;transform:translate(0,-50%);">25</div>
<div class="t" style="left:335.9px;top:413.11px;font-size:7.6px;letter-spacing:-0.05px;color:#000;transform-origin:0 50%;transform:translate(0,-50%);">24,2</div>
<div class="t" style="left:385.3px;top:413.11px;font-size:7.6px;letter-spacing:-0.05px;color:#000;transform-origin:0 50%;transform:translate(0,-50%);">25,1</div>
<div class="t" style="left:165.8px;top:424.04px;font-size:7.6px;letter-spacing:0.057px;color:#000;transform-origin:0 50%;transform:translate(0,-50%);">27/02/2008 11:38:12</div>
<div class="t" style="left:248.2px;top:424.04px;font-size:7.6px;letter-spacing:0.162px;color:#000;transform-origin:0 50%;transform:translate(0,-50%);">Interval</div>
<div class="t" style="left:286.0px;top:424.04px;font-size:7.6px;letter-spacing:-0.05px;color:#000;transform-origin:0 50%;transform:translate(0,-50%);">25,4</div>
<div class="t" style="left:335.9px;top:424.04px;font-size:7.6px;letter-spacing:-0.05px;color:#000;transform-origin:0 50%;transform:translate(0,-50%);">24,4</div>
<div class="t" style="left:385.3px;top:424.04px;font-size:7.6px;letter-spacing:-0.05px;color:#000;transform-origin:0 50%;transform:translate(0,-50%);">25,4</div>
<div class="t" style="left:165.8px;top:434.97px;font-size:7.6px;letter-spacing:0.057px;color:#000;transform-origin:0 50%;transform:translate(0,-50%);">27/02/2008 11:38:42</div>
<div class="t" style="left:248.2px;top:434.97px;font-size:7.6px;letter-spacing:0.162px;color:#000;transform-origin:0 50%;transform:translate(0,-50%);">Interval</div>
<div class="t" style="left:286.0px;top:434.97px;font-size:7.6px;letter-spacing:-0.05px;color:#000;transform-origin:0 50%;transform:translate(0,-50%);">24,9</div>
<div class="t" style="left:335.9px;top:434.97px;font-size:7.6px;letter-spacing:-0.05px;color:#000;transform-origin:0 50%;transform:translate(0,-50%);">24,6</div>
<div class="t" style="left:385.3px;top:434.97px;font-size:7.6px;letter-spacing:-0.05px;color:#000;transform-origin:0 50%;transform:translate(0,-50%);">25,7</div>
<div class="t" style="left:165.8px;top:445.90000000000003px;font-size:7.6px;letter-spacing:0.057px;color:#000;transform-origin:0 50%;transform:translate(0,-50%);">27/02/2008 11:39:12</div>
<div class="t" style="left:248.2px;top:445.90000000000003px;font-size:7.6px;letter-spacing:0.162px;color:#000;transform-origin:0 50%;transform:translate(0,-50%);">Interval</div>
<div class="t" style="left:286.0px;top:445.90000000000003px;font-size:7.6px;letter-spacing:-0.05px;color:#000;transform-origin:0 50%;transform:translate(0,-50%);">27,7</div>
<div class="t" style="left:335.9px;top:445.90000000000003px;font-size:7.6px;letter-spacing:-0.05px;color:#000;transform-origin:0 50%;transform:translate(0,-50%);">25,5</div>
<div class="t" style="left:385.3px;top:445.90000000000003px;font-size:7.6px;letter-spacing:-0.05px;color:#000;transform-origin:0 50%;transform:translate(0,-50%);">25,6</div>
<div class="t" style="left:165.8px;top:456.83000000000004px;font-size:7.6px;letter-spacing:0.057px;color:#000;transform-origin:0 50%;transform:translate(0,-50%);">27/02/2008 11:39:42</div>
<div class="t" style="left:248.2px;top:456.83000000000004px;font-size:7.6px;letter-spacing:0.162px;color:#000;transform-origin:0 50%;transform:translate(0,-50%);">Interval</div>
<div class="t" style="left:286.0px;top:456.83000000000004px;font-size:7.6px;letter-spacing:-0.05px;color:#000;transform-origin:0 50%;transform:translate(0,-50%);">26,6</div>
<div class="t" style="left:335.9px;top:456.83000000000004px;font-size:7.6px;letter-spacing:-0.05px;color:#000;transform-origin:0 50%;transform:translate(0,-50%);">25,7</div>
<div class="t" style="left:385.3px;top:456.83000000000004px;font-size:7.6px;letter-spacing:-0.05px;color:#000;transform-origin:0 50%;transform:translate(0,-50%);">25,5</div>
<div class="a" style="left:164.7px;top:330.3px;width:81.9px;height:11.4px;border:1px solid #111;border-right-width:1.4px;border-bottom-width:1.9px;box-sizing:border-box"></div>
<div class="a" style="left:680.8px;top:306.6px;width:13.8px;height:156.2px;background:#f7f6f0;"></div>
<div class="a" style="left:680.8px;top:306.6px;width:13.8px;height:14.7px;background:#F0EFE4;box-sizing:border-box;border-top:0.7px solid #fff;border-left:0.7px solid #fff;border-right:0.9px solid #8e8c7e;border-bottom:1px solid #7e7c70"></div>
<div class="a" style="left:680.8px;top:321.3px;width:13.8px;height:14.1px;background:#F0EFE4;box-sizing:border-box;border-top:0.7px solid #fff;border-left:0.7px solid #fff;border-right:0.9px solid #8e8c7e;border-bottom:1px solid #7e7c70"></div>
<div class="a" style="left:680.8px;top:335.4px;width:13.8px;height:12.2px;background:#F0EFE4;box-sizing:border-box;border-top:0.7px solid #fff;border-left:0.7px solid #fff;border-right:0.9px solid #8e8c7e;border-bottom:1px solid #7e7c70"></div>
<div class="a" style="left:680.8px;top:347.6px;width:13.8px;height:8px;background:#F0EFE4;box-sizing:border-box;border-top:0.7px solid #fff;border-left:0.7px solid #fff;border-right:0.9px solid #8e8c7e;border-bottom:1px solid #7e7c70"></div>
<div class="a" style="left:680.8px;top:393.2px;width:13.8px;height:11.8px;background:#F0EFE4;box-sizing:border-box;border-top:0.7px solid #fff;border-left:0.7px solid #fff;border-right:0.9px solid #8e8c7e;border-bottom:1px solid #7e7c70"></div>
<div class="a" style="left:680.8px;top:405px;width:13.8px;height:14.4px;background:#F0EFE4;box-sizing:border-box;border-top:0.7px solid #fff;border-left:0.7px solid #fff;border-right:0.9px solid #8e8c7e;border-bottom:1px solid #7e7c70"></div>
<div class="a" style="left:680.8px;top:419.4px;width:13.8px;height:14.4px;background:#F0EFE4;box-sizing:border-box;border-top:0.7px solid #fff;border-left:0.7px solid #fff;border-right:0.9px solid #8e8c7e;border-bottom:1px solid #7e7c70"></div>
<div class="a" style="left:680.8px;top:433.8px;width:13.8px;height:14.4px;background:#F0EFE4;box-sizing:border-box;border-top:0.7px solid #fff;border-left:0.7px solid #fff;border-right:0.9px solid #8e8c7e;border-bottom:1px solid #7e7c70"></div>
<div class="a" style="left:680.8px;top:448.2px;width:13.8px;height:14.6px;background:#F0EFE4;box-sizing:border-box;border-top:0.7px solid #fff;border-left:0.7px solid #fff;border-right:0.9px solid #8e8c7e;border-bottom:1px solid #7e7c70"></div>
<svg class="a" style="left:681px;top:306px" width="14" height="160" viewBox="681 306 14 160">
<g fill="#aeac9e"><path d="M685.2 311.7 h4.8 v0.8 h-4.8z M687.6 312.7 l2.5 2.9 h-5z"/>
<path d="M687.6 324.8 l2.3 2.6 h-4.6z M687.6 328.3 l2.3 2.6 h-4.6z"/></g>
<g fill="#000"><path d="M687.7 340.8 l2.8 3 h-5.6z"/>
<path d="M688.2 401.5 l3 -3.1 h-6z"/>
<path d="M688.2 412.9 l2.2 -2.8 h-4.4z M688.2 416 l2.2 -2.8 h-4.4z"/>
<path d="M688.1 428.4 l2.3 -2.6 h-4.6z M685.7 428.7 h4.8 v0.9 h-4.8z"/></g>
<path d="M687.3 438.2 a1.35 1.5 0 0 1 2.7 0 l-0.8 4.4 h-1.1z" fill="#e2583c"/><circle cx="688.65" cy="444.6" r="1.1" fill="#e2583c"/>
<path d="M688 451.4 l4.6 5.2 h-9.2z" fill="#e6ea68" stroke="#b8bc50" stroke-width="0.4"/>
<path d="M683.2 457.8 q4.8 -2.2 9.6 0 q-4.8 2.6 -9.6 0z" fill="#f4f4e0" stroke="#222" stroke-width="0.7"/>
<circle cx="688" cy="457.9" r="1.2" fill="#111"/>
</svg>
<div class="a" style="left:163.4px;top:461.8px;width:88.19999999999999px;height:5px;background:#f1f0e5;"></div>
<div class="a" style="left:162px;top:461.8px;width:1.4px;height:5px;background:#5c5a50;"></div>
<div class="a" style="left:162px;top:466px;width:89.6px;height:14.7px;background:linear-gradient(#f0efe4,#ECEADC 40%,#EAE8DA);border:1.3px solid #45433a;border-top:none;border-radius:0 0 3.5px 3.5px;box-sizing:border-box"></div>
<div class="t" style="left:206.7px;top:474.3px;font-size:7.5px;letter-spacing:0.254px;color:#000;transform:translate(-50%,-50%);font-weight:bold;">Readings</div>
<div class="a" style="left:250.4px;top:467px;width:90.89999999999999px;height:13.7px;background:linear-gradient(#f0efe4,#ECEADC 50%,#E8E6D8);border:1.2px solid #45433a;border-top:none;border-radius:0 0 3.5px 3.5px;box-sizing:border-box"></div>
<div class="t" style="left:297.1px;top:474.3px;font-size:7.5px;letter-spacing:-0.082px;color:#000;transform:translate(-50%,-50%);">Statistics</div>
<div class="a" style="left:340.09999999999997px;top:467px;width:89.89999999999999px;height:13.7px;background:linear-gradient(#f0efe4,#ECEADC 50%,#E8E6D8);border:1.2px solid #45433a;border-top:none;border-radius:0 0 3.5px 3.5px;box-sizing:border-box"></div>
<div class="t" style="left:386px;top:474.3px;font-size:7.5px;letter-spacing:-0.045px;color:#000;transform:translate(-50%,-50%);">Analysis File Info</div>
<div class="a" style="left:428.79999999999995px;top:467px;width:90.80000000000003px;height:13.7px;background:linear-gradient(#f0efe4,#ECEADC 50%,#E8E6D8);border:1.2px solid #45433a;border-top:none;border-radius:0 0 3.5px 3.5px;box-sizing:border-box"></div>
<div class="t" style="left:474px;top:474.3px;font-size:7.5px;letter-spacing:0.013px;color:#000;transform:translate(-50%,-50%);">Channel Info</div>
</div></body></html>
